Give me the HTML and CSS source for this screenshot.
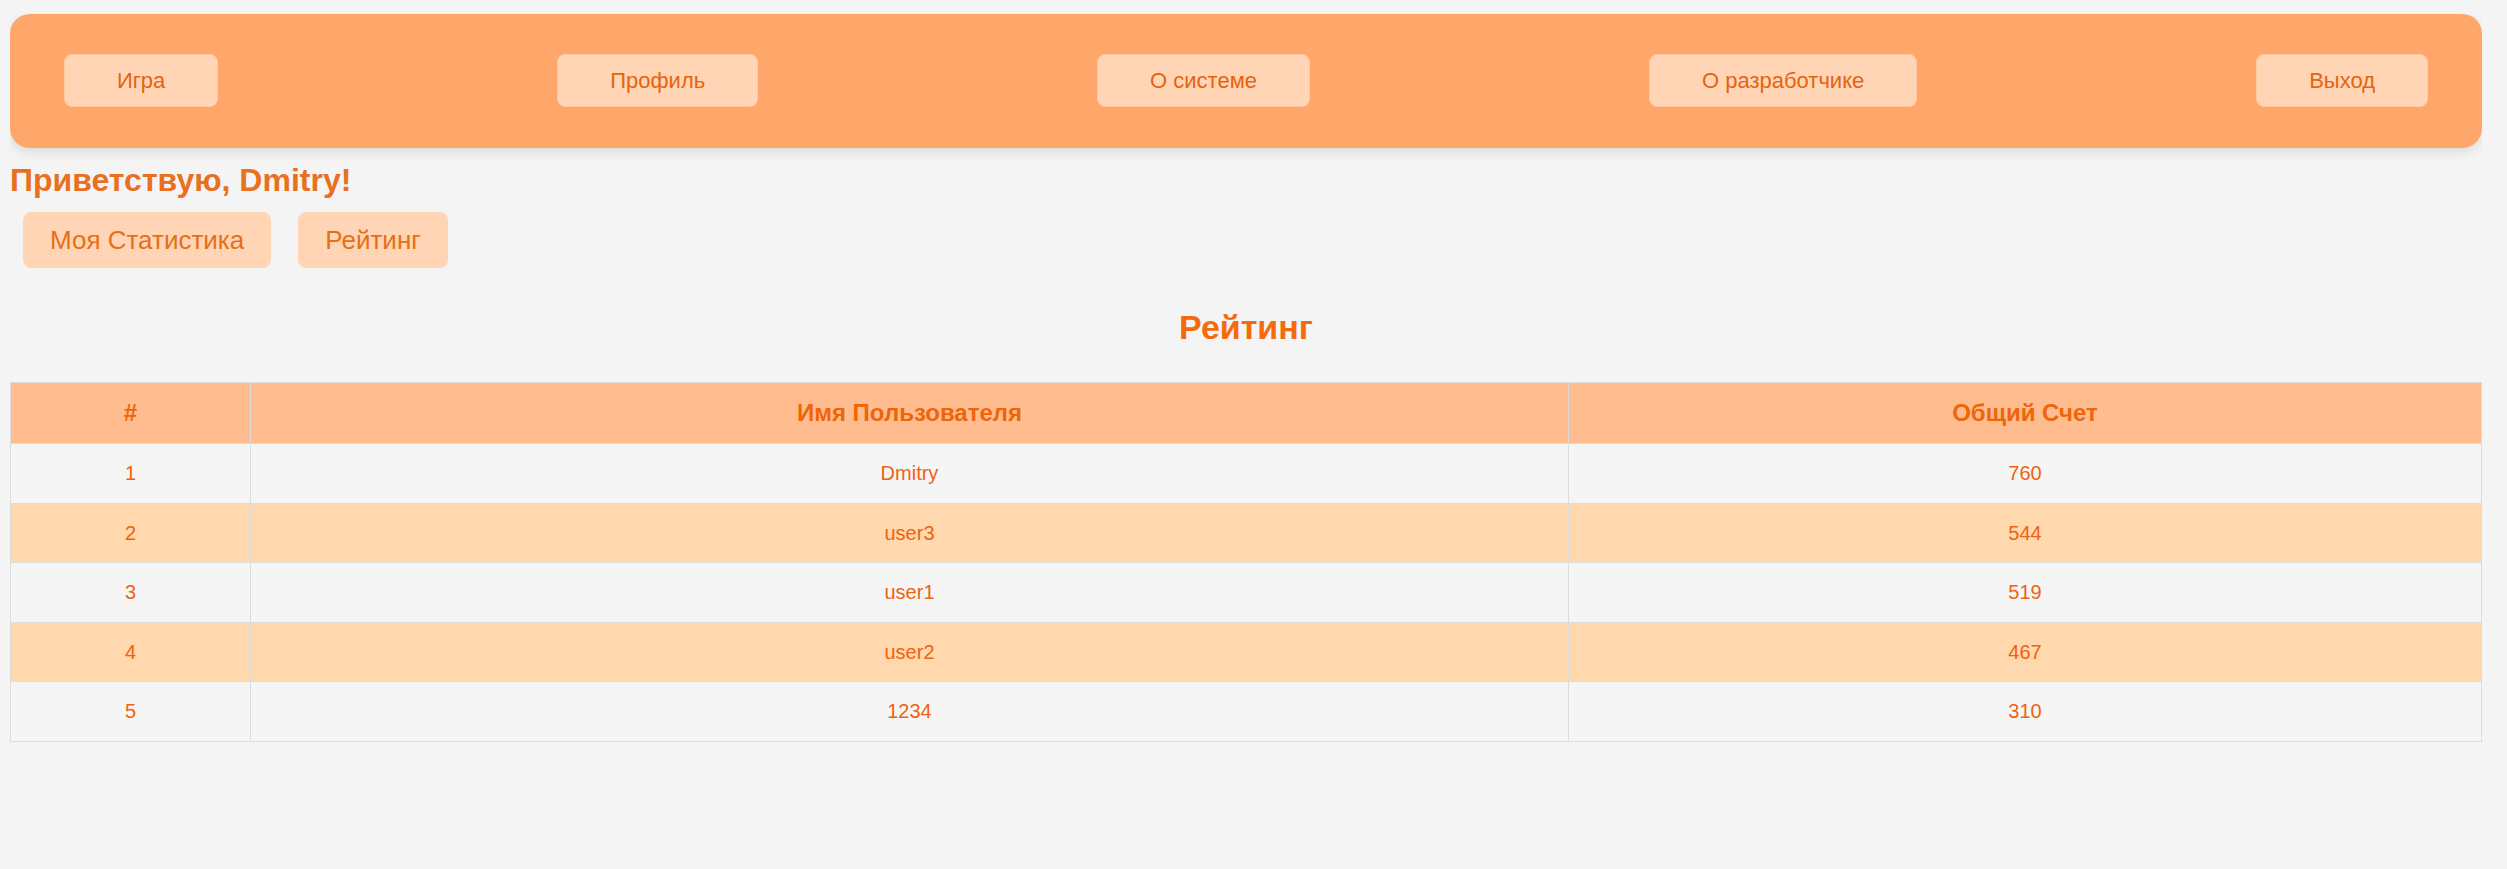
FILE: index.html
```html
<!DOCTYPE html>
<html lang="ru">
<head>
<meta charset="utf-8">
<title>Рейтинг</title>
<link rel="stylesheet" href="styles.css">
</head>
<body>
<header class="topbar">
  <nav class="nav">
    <a class="nav-btn" href="#">Игра</a>
    <a class="nav-btn" href="#">Профиль</a>
    <a class="nav-btn" href="#">О системе</a>
    <a class="nav-btn" href="#">О разработчике</a>
    <a class="nav-btn" href="#">Выход</a>
  </nav>
</header>
<h1 class="greeting">Приветствую, Dmitry!</h1>
<div class="tabs">
  <button class="tab-btn">Моя Статистика</button>
  <button class="tab-btn">Рейтинг</button>
</div>
<h2 class="title">Рейтинг</h2>
<table class="rating">
  <colgroup>
    <col class="col-rank">
    <col class="col-name">
    <col class="col-score">
  </colgroup>
  <thead>
    <tr><th>#</th><th>Имя Пользователя</th><th>Общий Счет</th></tr>
  </thead>
  <tbody>
    <tr><td>1</td><td>Dmitry</td><td>760</td></tr>
    <tr><td>2</td><td>user3</td><td>544</td></tr>
    <tr><td>3</td><td>user1</td><td>519</td></tr>
    <tr><td>4</td><td>user2</td><td>467</td></tr>
    <tr><td>5</td><td>1234</td><td>310</td></tr>
  </tbody>
</table>
</body>
</html>
```

FILE: styles.css
```css
* { box-sizing: border-box; }

body {
  margin: 14px 25px 0 10px;
  background: #f4f4f4;
  font-family: "Liberation Sans", Arial, sans-serif;
}

.topbar {
  background: #ffa76a;
  border-radius: 20px;
  padding: 40px 54px 41px;
  box-shadow: 0 4px 12px rgba(0, 0, 0, 0.1);
}

.nav {
  display: flex;
  justify-content: space-between;
  align-items: center;
}

.nav-btn {
  display: block;
  font-size: 22px;
  line-height: 25px;
  padding: 13px 52px;
  background: #ffd5b6;
  border: 1px solid #ffc9a0;
  border-radius: 8px;
  color: #e5640f;
  text-decoration: none;
}

.greeting {
  margin: 14px 0 0 0;
  font-size: 32px;
  font-weight: bold;
  color: #e8701e;
  line-height: 37px;
}

.tabs {
  display: flex;
  gap: 27px;
  margin: 13px 0 0 13px;
}

.tab-btn {
  font-family: "Liberation Sans", Arial, sans-serif;
  font-size: 26px;
  line-height: 30px;
  padding: 12px 26px;
  background: #ffd5b6;
  border: 1px solid #ffd5b6;
  border-radius: 8px;
  color: #e86f14;
  cursor: pointer;
}

.title {
  margin: 40px 0 35px;
  text-align: center;
  font-size: 34px;
  line-height: 39px;
  font-weight: bold;
  color: #f56a0c;
}

.rating {
  width: 100%;
  border-collapse: collapse;
  table-layout: fixed;
}

.col-rank { width: 240px; }
.col-name { width: 1318px; }
.col-score { width: auto; }

.rating th,
.rating td {
  border: 1px solid #dcdcdc;
  text-align: center;
}

.rating th {
  padding: 17px 8px;
  background: #ffbd8f;
  color: #f0640a;
  font-size: 24px;
  line-height: 26px;
  font-weight: bold;
}

.rating td {
  padding: 18px 8px 17.5px;
  font-size: 20px;
  line-height: 23px;
  color: #f0620f;
}

.rating tbody tr:nth-child(odd) { background: #f5f5f5; }
.rating tbody tr:nth-child(even) { background: #ffd8ad; }
```
